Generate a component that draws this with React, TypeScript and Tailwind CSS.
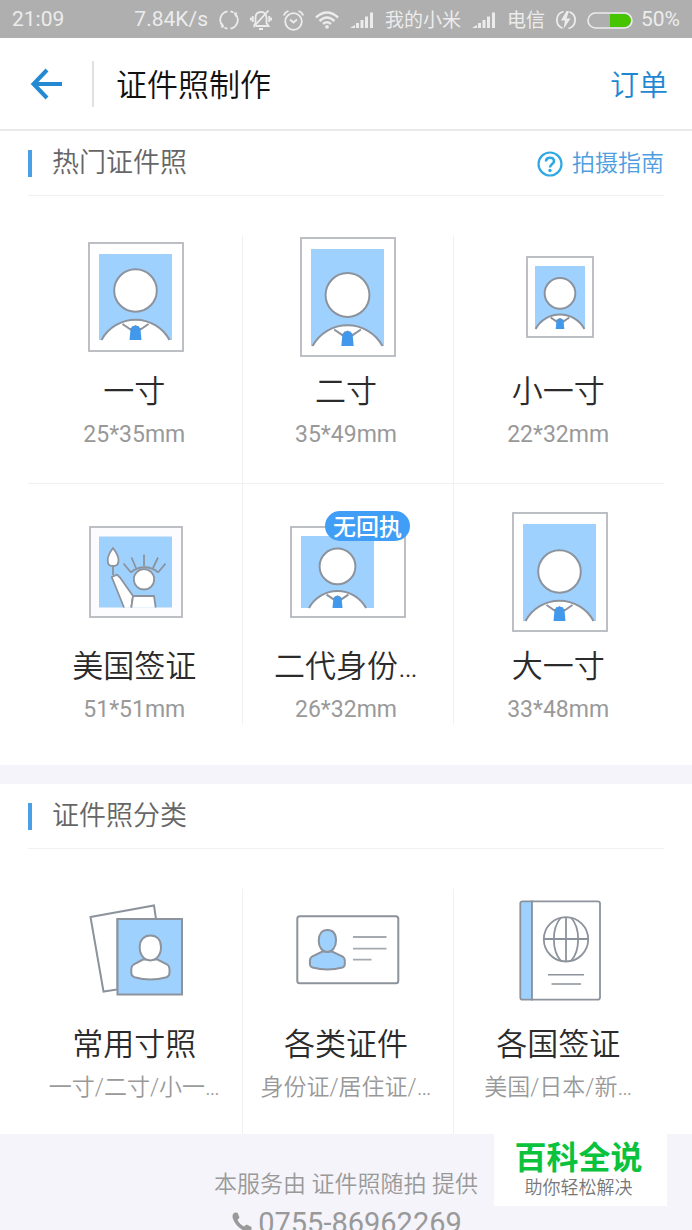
import React from 'react';
import clsx from 'clsx';

interface BustProps {
  x: number;
  y: number;
  scale: number;
}

interface PhotoFrameProps {
  width: number;
  height: number;
  photo: { x: number; y: number; w: number; h: number };
  scale: number;
}

interface Item {
  name: string;
  desc: string;
  icon: React.ReactNode;
  badge?: string;
}

const LINE = '#8c939c';
const FRAME = '#b5b8be';
const SKY = '#9fd1ff';

// Head and shoulders, anchored at the bottom centre of the photo
const Bust: React.FC<BustProps> = ({ x, y, scale }) => (
  <g transform={`translate(${x} ${y}) scale(${scale})`} stroke={LINE} strokeWidth={2 / scale} fill="#fff">
    <circle cx="0" cy="-49.5" r="21.3" />
    <path d="M-34 0A38.7 38.7 0 0 1 34 0" />
    <path d="M-13 -16L-5 -10.5L0 -14L5 -10.5L13 -16" fill="none" strokeLinejoin="round" />
    <path d="M-3 -14H3L5 -10.5L6 0H-6L-5 -10.5Z" fill="#4299ec" stroke="none" />
  </g>
);

const PhotoFrame: React.FC<PhotoFrameProps> = ({ width, height, photo, scale }) => (
  <svg width={width} height={height} viewBox={`0 0 ${width} ${height}`} fill="none" aria-hidden="true">
    <rect x="1" y="1" width={width - 2} height={height - 2} fill="#fff" stroke={FRAME} strokeWidth="1.8" />
    <rect x={photo.x} y={photo.y} width={photo.w} height={photo.h} fill={SKY} />
    <Bust x={photo.x + photo.w / 2} y={photo.y + photo.h} scale={scale} />
  </svg>
);

const LibertyIcon = () => (
  <svg width="94" height="92" viewBox="0 0 94 92" fill="none" aria-hidden="true">
    <rect x="1" y="1" width="92" height="90" fill="#fcfcff" stroke={FRAME} strokeWidth="1.8" />
    <rect x="10" y="10.5" width="73" height="71" fill={SKY} />
    <g stroke={LINE} strokeWidth="1.8" strokeLinejoin="round">
      <path d="M24 40V49" />
      <path d="M24 22C27 26 29.5 31 29.5 34C29.5 37 28 39.5 26 39.8H22C20 39.5 18.7 37 18.7 34C18.7 31 21 26 24 22Z" fill="#fff" />
      <path d="M35 81.5L22.7 51L28 48.7L31 51.5L44 70L42.3 81.5" fill="#fff" />
      <path d="M42.3 81.5L44 70H65L66.7 81.5" fill="#fff" />
      <circle cx="55" cy="53.3" r="10.2" fill="#fff" />
      <path d="M42 46.5C49 39.5 62 39.5 69 46.5" />
      <path d="M34.5 37.5L42 46.5M42.5 31.5L47 42M55 28.5V40M69 31.5L64 42M76.5 37.7L69 46.5" />
    </g>
  </svg>
);

const StackedPhotosIcon = () => (
  <svg width="95" height="92" viewBox="-1 -1 95 92" fill="none" aria-hidden="true">
    <g stroke={LINE} strokeWidth="2">
      <path d="M0.5 12L64 0.5L66 14H27.5V84.5L13.5 86.5Z" fill="#fff" />
      <rect x="27.5" y="14" width="64.5" height="75.5" fill={SKY} />
      <path d="M53 54.5L43.5 59.5Q41.5 61 41.3 64V68Q41.3 71 44.5 72.2Q60.3 77 76.5 72.2Q79.5 71 79.5 68V64Q79.3 61 77.3 59.5L67.5 54.5Z" fill="#fff" />
      <path d="M60.3 30.5C67 30.5 71 35 71 42C71 50 66.5 55.4 60.3 55.4C54 55.4 49.7 50 49.7 42C49.7 35 54 30.5 60.3 30.5Z" fill="#fff" />
    </g>
  </svg>
);

const IdCardIcon = () => (
  <svg width="104" height="70" viewBox="-1 -1 104 70" fill="none" aria-hidden="true">
    <g stroke={LINE} strokeWidth="2">
      <rect x="0.3" y="0.3" width="101" height="67" rx="2.5" fill="#fff" />
      <path d="M25.5 35.5L15 40.5Q13 42 12.9 44.5V48.5Q13 50.5 15.5 51.5Q30.5 55.5 45.5 51.5Q47.8 50.5 47.8 48.5V44.5Q47.7 42 45.7 40.5L35 35.5Z" fill={SKY} />
      <path d="M30.3 14C36 14 39 18 39 24.5C39 31 35.5 36 30.3 36C25 36 21.7 31 21.7 24.5C21.7 18 25 14 30.3 14Z" fill={SKY} />
    </g>
    <path d="M56 21H89.5M56 32.7H89.5M56 43.7H74.5" stroke="#a5aab0" strokeWidth="1.8" />
  </svg>
);

const PassportIcon = () => (
  <svg width="82" height="101" viewBox="-1 -1 82 101" fill="none" aria-hidden="true">
    <g stroke={LINE} strokeWidth="1.8">
      <path d="M12 0.3H2.5Q0.3 0.3 0.3 2.5V96.5Q0.3 98.7 2.5 98.7H12Z" fill={SKY} />
      <path d="M12 0.3H77.5Q80 0.3 80 2.5V96.5Q80 98.7 77.5 98.7H12Z" fill="#fff" />
      <circle cx="46" cy="38.3" r="22.2" />
      <path d="M23.8 38H68.2M46 16V60.5M41 16.5C31.5 27 31.5 49.5 41 60M51 16.5C60.5 27 60.5 49.5 51 60" />
    </g>
    <path d="M28 73.7H64M31.5 83H61" stroke={LINE} strokeWidth="1.6" />
  </svg>
);

const SignalIcon = () => (
  <svg width="24" height="18" viewBox="0 0 24 18" fill="#ececec" aria-hidden="true">
    <path d="M0 17L5 14V17Z" />
    <rect x="6" y="12" width="3" height="5" />
    <rect x="10.5" y="9" width="3" height="8" />
    <rect x="15" y="5.5" width="3" height="11.5" />
    <rect x="20" y="1.5" width="3" height="15.5" />
  </svg>
);

const SyncIcon = () => (
  <svg width="20" height="20" viewBox="0 0 20 20" fill="none" stroke="#ececec" strokeWidth="1.8" aria-hidden="true">
    <path d="M8.5 1.4A8.7 8.7 0 0 0 4 16.3M11.5 18.6A8.7 8.7 0 0 0 16 3.7" />
    <path d="M11.5 1.4A8.7 8.7 0 0 1 14.5 2.6M8.5 18.6A8.7 8.7 0 0 1 5.5 17.4" />
    <path d="M3 13.5L4 16.5L2 17M17 6.5L16 3.5L18 3" />
  </svg>
);

const MutedBellIcon = () => (
  <svg width="22" height="22" viewBox="0 0 22 22" fill="none" stroke="#ececec" strokeWidth="1.8" aria-hidden="true">
    <path d="M5.5 17H18.5L16.5 14V9C16.5 5 14.5 3 11 3C7.5 3 5.5 5 5.5 9V14L4 16.5" />
    <path d="M18.5 1.5L3.5 18M9 20H13" />
    <path d="M2.8 7V13M0.9 8.5V11.5M19.2 7V13M21.1 8.5V11.5" />
  </svg>
);

const AlarmIcon = () => (
  <svg width="21" height="21" viewBox="0 0 21 21" fill="none" stroke="#ececec" strokeWidth="1.8" aria-hidden="true">
    <circle cx="10.5" cy="11.5" r="8.3" />
    <path d="M7 9.5L10.5 12.5L14 9.5" />
    <path d="M0.8 5.5Q2 2 5.5 1M20.2 5.5Q19 2 15.5 1" />
  </svg>
);

const WifiIcon = () => (
  <svg width="24" height="18" viewBox="0 0 24 18" fill="none" stroke="#ececec" strokeWidth="2.4" aria-hidden="true">
    <path d="M1 6.5Q12 -3.5 23 6.5M4.5 10Q12 3 19.5 10M8 13Q12 9.5 16 13" />
    <circle cx="12" cy="15.8" r="1.9" fill="#ececec" stroke="none" />
  </svg>
);

const ChargeIcon = () => (
  <svg width="20" height="20" viewBox="0 0 20 20" fill="none" stroke="#ececec" strokeWidth="1.8" aria-hidden="true">
    <path d="M7.5 1.5A8.8 8.8 0 0 0 6.5 18.2M12.5 18.5A8.8 8.8 0 0 0 13.5 1.8" />
    <path d="M10.5 1L5 10.5H9L7.5 19L14.5 8.5H10.5L13 1Z" fill="#ececec" stroke="none" />
  </svg>
);

const BatteryIcon = () => (
  <svg width="46" height="17" viewBox="0 0 46 17" fill="none" aria-hidden="true">
    <path d="M23 2H37.5A6.5 6.5 0 0 1 37.5 15H23Z" fill="#46c400" />
    <rect x="1" y="1" width="44" height="15" rx="7.5" stroke="#ececec" strokeWidth="1.6" />
  </svg>
);

const hotItems: Item[][] = [
  [
    {
      name: '一寸',
      desc: '25*35mm',
      icon: <PhotoFrame width={96} height={110} photo={{ x: 11, y: 12, w: 73, h: 86 }} scale={1} />,
    },
    {
      name: '二寸',
      desc: '35*49mm',
      icon: <PhotoFrame width={96} height={120} photo={{ x: 11, y: 12, w: 73, h: 97 }} scale={1.03} />,
    },
    {
      name: '小一寸',
      desc: '22*32mm',
      icon: <PhotoFrame width={68} height={82} photo={{ x: 9, y: 10, w: 50, h: 63 }} scale={0.72} />,
    },
  ],
  [
    { name: '美国签证', desc: '51*51mm', icon: <LibertyIcon /> },
    {
      name: '二代身份…',
      desc: '26*32mm',
      badge: '无回执',
      icon: <PhotoFrame width={116} height={92} photo={{ x: 11, y: 10, w: 73, h: 72 }} scale={0.84} />,
    },
    {
      name: '大一寸',
      desc: '33*48mm',
      icon: <PhotoFrame width={96} height={120} photo={{ x: 11, y: 12, w: 73, h: 97 }} scale={1} />,
    },
  ],
];

const categories: Item[] = [
  { name: '常用寸照', desc: '一寸/二寸/小一…', icon: <StackedPhotosIcon /> },
  { name: '各类证件', desc: '身份证/居住证/…', icon: <IdCardIcon /> },
  { name: '各国签证', desc: '美国/日本/新…', icon: <PassportIcon /> },
];

const ItemLink: React.FC<{ item: Item; descClass?: string }> = ({ item, descClass }) => (
  <a href="#" className="flex flex-col items-center">
    <span className="relative flex h-[122px] items-center justify-center">
      {item.icon}
      {item.badge && (
        <span className="absolute top-0 -right-1 flex h-[30px] items-center rounded-full bg-[#409ef7] px-2 pt-1 text-[23px] font-medium whitespace-nowrap text-white">
          {item.badge}
        </span>
      )}
    </span>
    <span className="mt-[14px] pr-1 text-[31px] leading-10 whitespace-nowrap text-[#2b2b2b]">{item.name}</span>
    <span className={clsx('mt-2 pr-1 text-[23px] leading-[30px] whitespace-nowrap text-[#999]', descClass)}>
      {item.desc}
    </span>
  </a>
);

const SectionTitle: React.FC<{ title: string; children?: React.ReactNode }> = ({ title, children }) => (
  <div className="flex h-[65px] items-center justify-between border-b border-[#f1f1f1]">
    <h2 className="flex items-center gap-5 text-[27px] leading-8 text-[#666]">
      <span className="h-[27px] w-1 bg-[#4a9fe6]" />
      {title}
    </h2>
    {children}
  </div>
);

const App = () => {
  return (
    <div className="relative flex h-screen flex-col overflow-hidden bg-[#f4f4fa] font-[Roboto,'Noto_Sans_CJK_SC',sans-serif] font-[350]">
      <div className="flex h-[38px] shrink-0 items-center justify-between bg-[#afafaf] px-3 pt-0.5 text-[21px] font-normal text-[#ececec]">
        <span>21:09</span>
        <div className="flex items-center gap-[11px] whitespace-nowrap">
          <span>7.84K/s</span>
          <SyncIcon />
          <MutedBellIcon />
          <AlarmIcon />
          <WifiIcon />
          <SignalIcon />
          <span className="pt-0.5 text-[19px]">我的小米</span>
          <SignalIcon />
          <span className="pt-0.5 text-[19px]">电信</span>
          <ChargeIcon />
          <div className="flex items-center gap-2">
            <BatteryIcon />
            <span>50%</span>
          </div>
        </div>
      </div>

      <header className="flex h-[93px] shrink-0 items-center border-b-2 border-[#e9e9e9] bg-white pr-6 pl-[30px]">
        <button type="button" aria-label="返回" className="mr-[30px]">
          <svg width="32" height="32" viewBox="0 0 32 32" fill="none" stroke="#2389d2" strokeWidth="4">
            <path d="M17 2L3.5 16L17 30M3.5 16H32" />
          </svg>
        </button>
        <span className="h-[46px] w-0.5 bg-[#e0e0e0]" />
        <h1 className="ml-[22px] flex-1 pt-1 text-[31px] leading-10 text-[#111]">证件照制作</h1>
        <a href="#" className="pt-1 text-[29px] leading-10 text-[#1f87d1]">
          订单
        </a>
      </header>

      <section className="shrink-0 bg-white px-7 pb-10">
        <SectionTitle title="热门证件照">
          <a href="#" className="flex items-center gap-2 pt-0.5 text-[23px] leading-8 text-[#4d9de0]">
            <svg width="28" height="28" viewBox="0 0 28 28" fill="none" stroke="#2fa9e3" strokeWidth="2.2" aria-hidden="true">
              <circle cx="14" cy="14" r="11.5" />
              <path d="M10 11.5C10 9 11.7 7.7 14 7.7C16.3 7.7 18 9 18 11.2C18 14 14 14 14 17.5" strokeWidth="2.6" />
              <circle cx="14" cy="20.5" r="1.7" fill="#2fa9e3" stroke="none" />
            </svg>
            拍摄指南
          </a>
        </SectionTitle>
        <div className="border-b border-[#f1f1f1] pt-10">
          <div className="-mr-0.5 ml-[3px] grid grid-cols-3 divide-x divide-[#f1f1f1]">
            {hotItems[0].map((item) => (
              <div key={item.name} className="pb-[33px]">
                <ItemLink item={item} descClass="font-normal" />
              </div>
            ))}
          </div>
        </div>
        <div className="-mr-0.5 ml-[3px] grid grid-cols-3 divide-x divide-[#f1f1f1]">
          {hotItems[1].map((item) => (
            <div key={item.name} className="pt-[27px]">
              <ItemLink item={item} descClass="font-normal" />
            </div>
          ))}
        </div>
      </section>

      <section className="mt-[19px] shrink-0 bg-white px-7">
        <SectionTitle title="证件照分类" />
        <div className="-mr-0.5 ml-[3px] grid grid-cols-3 divide-x divide-[#f1f1f1] pt-10">
          {categories.map((item) => (
            <div key={item.name} className="pb-[31px]">
              <ItemLink item={item} />
            </div>
          ))}
        </div>
      </section>

      <footer className="relative flex shrink-0 flex-col items-center pt-[35px] text-[#999]">
        <p className="text-[23px] leading-8">本服务由 证件照随拍 提供</p>
        <a href="tel:0755-86962269" className="mt-0.5 flex items-center gap-1.5 pl-0.5 text-[29px] leading-10 font-normal">
          <svg width="20" height="22" viewBox="0 0 20 22" fill="#999" aria-hidden="true">
            <path d="M3 0.5L5.5 0.8L7.5 5.5L5.5 8C7 11 9 13 12 14.5L14.5 12.5L19.5 15V17.5C18 20 15 20 12.5 19C7 16.5 3 12 1 7C0 4 0.5 1.5 3 0.5Z" />
          </svg>
          0755-86962269
        </a>
        <div className="absolute top-0 right-[25px] flex h-[72px] w-[173px] flex-col items-center bg-white pr-1">
          <strong className="mt-1.5 text-[32px] leading-9 font-bold text-[#0bc23c]">百科全说</strong>
          <span className="text-[18px] leading-6 text-[#777]">助你轻松解决</span>
        </div>
      </footer>
    </div>
  );
};

export default App;
